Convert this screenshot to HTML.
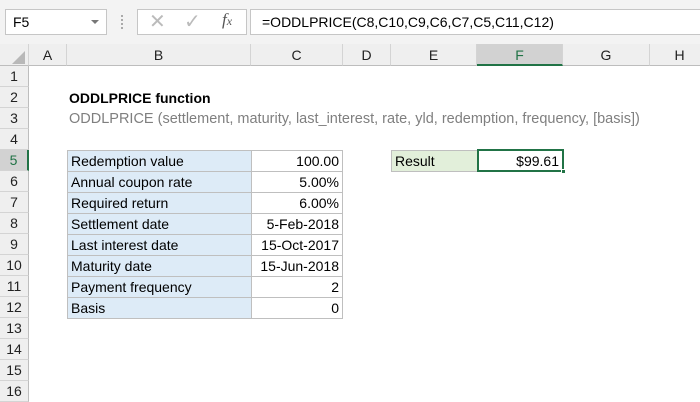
<!DOCTYPE html>
<html><head><style>
*{margin:0;padding:0;box-sizing:border-box}
body{width:700px;height:400px;overflow:hidden;background:#fff;font-family:"Liberation Sans",Calibri,sans-serif;font-size:14px;position:relative}
.a{position:absolute}
.top{left:0;top:0;width:700px;height:44px;background:#f3f3f3}
.box{background:#fff;border:1px solid #c6c6c6}
.ch{top:44px;height:22px;background:#efefef;border-right:1px solid #d4d4d4;border-bottom:1px solid #bdbdbd;text-align:center;line-height:22px;color:#222;font-size:14px}
.rh{left:0;width:29px;height:21px;background:#efefef;border-bottom:1px solid #d4d4d4;border-right:1px solid #bdbdbd;text-align:center;line-height:21px;color:#222}
.c{height:22px;line-height:20px;padding:0 3px;white-space:nowrap}
.lb{left:67px;width:185px;background:#ddebf7;border:1px solid #bfbfbf}
.vl{left:251px;width:92px;text-align:right;border:1px solid #bfbfbf}
</style></head><body>
<div class="a top"></div>
<div class="a box" style="left:5px;top:9px;width:102px;height:26px;line-height:24px;padding-left:7px">F5</div>
<div class="a" style="left:91px;top:20px;width:0;height:0;border-left:4px solid transparent;border-right:4px solid transparent;border-top:4px solid #777"></div>
<div class="a" style="left:121px;top:15px;width:2px;height:14px;border-left:2px dotted #aaa"></div>
<div class="a box" style="left:137px;top:9px;width:110px;height:26px"></div>
<div class="a" style="left:149px;top:9px;color:#bbb;font-size:20px">✕</div>
<div class="a" style="left:184px;top:9px;color:#bbb;font-size:20px">✓</div>
<div class="a" style="left:222px;top:10px;color:#555;font-family:'Liberation Serif',serif;font-style:italic;font-size:17px">f<span style="font-size:12px">x</span></div>
<div class="a box" style="left:250px;top:9px;width:460px;height:26px;line-height:24px;padding-left:11px">=ODDLPRICE(C8,C10,C9,C6,C7,C5,C11,C12)</div>

<div class="a ch" style="left:0;width:29px"></div>
<div class="a" style="left:12px;top:51px;width:0;height:0;border-left:13px solid transparent;border-bottom:13px solid #b8b8b8"></div>
<div class="a ch" style="left:29px;width:38px">A</div>
<div class="a ch" style="left:67px;width:184px">B</div>
<div class="a ch" style="left:251px;width:92px">C</div>
<div class="a ch" style="left:343px;width:48px">D</div>
<div class="a ch" style="left:391px;width:86px">E</div>
<div class="a ch" style="left:477px;width:86px;background:#d2d2d2;color:#217346;border-bottom:2px solid #217346">F</div>
<div class="a ch" style="left:563px;width:87px">G</div>
<div class="a ch" style="left:650px;width:60px">H</div>

<div class="a rh" style="top:66px">1</div>
<div class="a rh" style="top:87px">2</div>
<div class="a rh" style="top:108px">3</div>
<div class="a rh" style="top:129px">4</div>
<div class="a rh" style="top:150px;background:#d2d2d2;color:#217346;border-right:2px solid #217346">5</div>
<div class="a rh" style="top:171px">6</div>
<div class="a rh" style="top:192px">7</div>
<div class="a rh" style="top:213px">8</div>
<div class="a rh" style="top:234px">9</div>
<div class="a rh" style="top:255px">10</div>
<div class="a rh" style="top:276px">11</div>
<div class="a rh" style="top:297px">12</div>
<div class="a rh" style="top:318px">13</div>
<div class="a rh" style="top:339px">14</div>
<div class="a rh" style="top:360px">15</div>
<div class="a rh" style="top:381px">16</div>

<div class="a c" style="left:66px;top:88px;font-weight:bold">ODDLPRICE function</div>
<div class="a c" style="left:66px;top:109px;color:#7f7f7f;font-size:14.5px">ODDLPRICE (settlement, maturity, last_interest, rate, yld, redemption, frequency, [basis])</div>

<div class="a c lb" style="top:150px">Redemption value</div><div class="a c vl" style="top:150px">100.00</div>
<div class="a c lb" style="top:171px">Annual coupon rate</div><div class="a c vl" style="top:171px">5.00%</div>
<div class="a c lb" style="top:192px">Required return</div><div class="a c vl" style="top:192px">6.00%</div>
<div class="a c lb" style="top:213px">Settlement date</div><div class="a c vl" style="top:213px">5-Feb-2018</div>
<div class="a c lb" style="top:234px">Last interest date</div><div class="a c vl" style="top:234px">15-Oct-2017</div>
<div class="a c lb" style="top:255px">Maturity date</div><div class="a c vl" style="top:255px">15-Jun-2018</div>
<div class="a c lb" style="top:276px">Payment frequency</div><div class="a c vl" style="top:276px">2</div>
<div class="a c lb" style="top:297px">Basis</div><div class="a c vl" style="top:297px">0</div>

<div class="a c" style="left:391px;top:150px;width:87px;background:#e2efda;border:1px solid #bfbfbf">Result</div>
<div class="a c" style="left:477px;top:149px;width:87px;height:23px;text-align:right;border:2px solid #217346;line-height:20px">$99.61</div>
<div class="a" style="left:561px;top:169px;width:5px;height:5px;background:#217346;border:1px solid #fff"></div>
</body></html>
